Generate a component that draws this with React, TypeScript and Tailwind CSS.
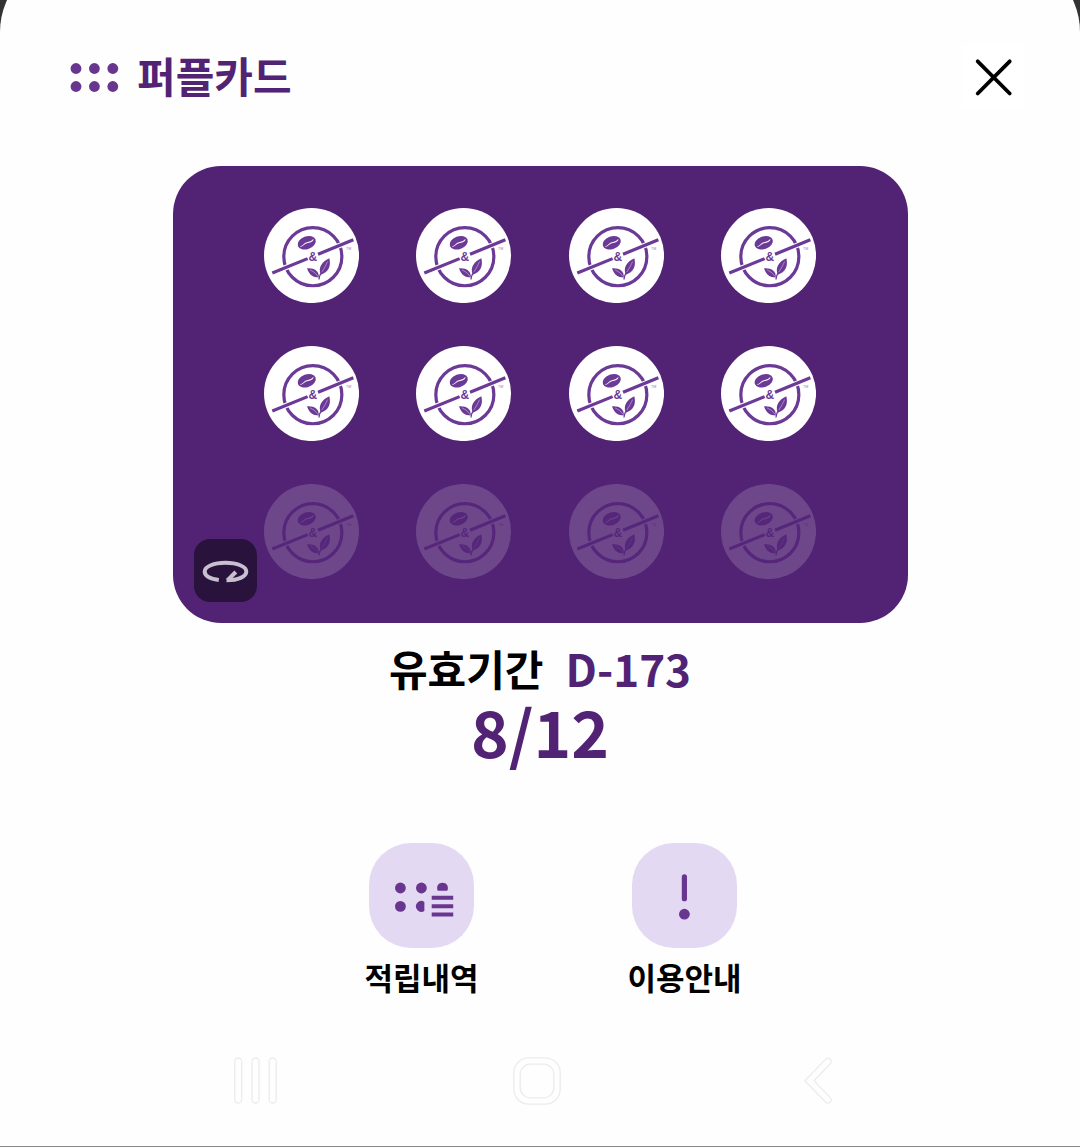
const KO = "font-['Noto_Sans_CJK_KR',sans-serif]";

const TOTAL = 12;
const EARNED = 8;

function StampLogo() {
  return (
    <svg viewBox="0 0 95 95" className="block w-full" aria-hidden="true">
      <circle cx="47.5" cy="47.5" r="47.5" fill="#fff" />
      <circle cx="48.8" cy="48.7" r="29" fill="none" stroke="#6b3a97" strokeWidth="3.2" />
      <path d="M14 62.7 L84 33.9" stroke="#fff" strokeWidth="5.4" />
      <path d="M8.3 65 L43.6 50.6 M54 46.3 L89.3 31.7" stroke="#6b3a97" strokeWidth="3.2" />
      <g transform="rotate(-20 42.7 34.7)">
        <ellipse cx="42.7" cy="34.7" rx="9.4" ry="6.3" fill="#6b3a97" />
        <path d="M35.5 36 C38 37.2 40 34 43 34.9 S47.5 35.6 50 34" fill="none" stroke="#fff" strokeWidth="0.9" />
      </g>
      <text x="48.9" y="53.1" textAnchor="middle" fontSize="12" fontWeight="700" fontFamily="Liberation Sans, sans-serif" fill="#6b3a97">&amp;</text>
      <path d="M43 60.3 C50 59.8 55 62.5 54.8 69.5 C48.5 69.5 45 66.5 43 60.3Z" fill="#6b3a97" />
      <path d="M65.3 50.3 C67.2 58 64.5 64.5 56.6 66.6 C54 59.5 57.5 54 65.3 50.3Z" fill="#6b3a97" />
      <path d="M46 61.8 Q51.5 64 54 68.4 M63.6 53.5 Q60.5 60.5 57 65" fill="none" stroke="#fff" strokeWidth="0.4" />
      <path d="M54.9 71.5 Q54.9 67.5 58 64" fill="none" stroke="#6b3a97" strokeWidth="1.3" />
      <text x="84.6" y="42.4" textAnchor="middle" fontSize="3.6" fontFamily="Liberation Sans, sans-serif" fill="#9a7ab8">TM</text>
    </svg>
  );
}

function RotateIcon() {
  return (
    <svg viewBox="0 0 63 63" className="block size-full" fill="none" stroke="#c8bfd0" strokeWidth="4" aria-hidden="true">
      <path d="M24.8 41 C16 39.8 10.7 36.6 10.7 32.5 C10.7 27.4 20 23.8 31.5 23.8 S52.3 27.4 52.3 32.5 C52.3 37.8 44 41.2 32.5 41.2" />
      <path d="M41.8 33 L33.6 41.2" />
    </svg>
  );
}

function HistoryIcon() {
  return (
    <svg viewBox="0 0 105 105" className="block size-full" fill="#69368f" aria-hidden="true">
      <circle cx="31.4" cy="45" r="5.4" />
      <circle cx="52.4" cy="45" r="5.4" />
      <path d="M68.8 47.7 A5.4 5.4 0 1 1 78.2 47.7Z" />
      <circle cx="31.4" cy="63.4" r="5.4" />
      <path d="M55.4 58.9 A5.4 5.4 0 1 0 55.4 67.9Z" />
      <path d="M62.7 52.8h21.5v4h-21.5zM62.7 61.2h21.5v4h-21.5zM62.7 69.6h21.5v4h-21.5z" />
    </svg>
  );
}

function GuideIcon() {
  return (
    <svg viewBox="0 0 105 105" className="block size-full" fill="#69368f" aria-hidden="true">
      <rect x="49.8" y="31.3" width="5.2" height="27" rx="2.6" />
      <circle cx="52.4" cy="71.2" r="5.4" />
    </svg>
  );
}

const actions = [
  { label: "적립내역", Icon: HistoryIcon },
  { label: "이용안내", Icon: GuideIcon },
];

export default function App() {
  return (
    <div className={`min-h-screen overflow-hidden bg-[#333] ${KO}`}>
      <main className="-mt-11 rounded-t-[76px] border-b border-[#888] bg-[#fefefe] pt-[89px] pb-[41px]">
        <header className="flex h-[63px] items-center justify-between pr-[55px] pl-[70px]">
          <h1 className="flex items-center gap-[18px] text-[42px] leading-[62px] font-bold text-[#522375]">
            <svg viewBox="0 0 49 31" className="w-[49px]" fill="#69368f" aria-hidden="true">
              {[6, 24.4, 42.8].map((x) => (
                <g key={x}>
                  <circle cx={x} cy="7.5" r="5.4" />
                  <circle cx={x} cy="25.5" r="5.4" />
                </g>
              ))}
            </svg>
            <span className="pb-1">퍼플카드</span>
          </h1>
          <button type="button" aria-label="닫기" className="size-[63px] bg-white">
            <svg viewBox="0 0 63 63" className="block size-full" stroke="#000" strokeWidth="3.8" strokeLinecap="round" aria-hidden="true">
              <path d="M15.7 16.3 L47.7 48.5 M47.7 16.3 L15.7 48.5" />
            </svg>
          </button>
        </header>

        <section className="relative mx-auto mt-[58px] w-[735px] max-w-full rounded-[48px] bg-[#522375] pt-[42px] pb-[44px]">
          <ul className="mx-auto grid w-[75%] grid-cols-4 gap-x-[57px] gap-y-[43px]">
            {Array.from({ length: TOTAL }, (_, i) => (
              <li key={i} className={i < EARNED ? "" : "opacity-[0.16]"}>
                <StampLogo />
              </li>
            ))}
          </ul>
          <button type="button" aria-label="카드 뒤집기" className="absolute bottom-[21px] left-[21px] size-[63px] rounded-2xl bg-[#29123b]">
            <RotateIcon />
          </button>
        </section>

        <div className="mt-[21px] flex items-center justify-center gap-[22px] text-[42px] leading-[48px] font-bold">
          <span className="text-black">유효기간</span>
          <span className="text-[44px] text-[#522375]">D-173</span>
        </div>
        <p className="text-center text-[64px] leading-[76px] font-bold text-[#522375]">
          {EARNED}/{TOTAL}
        </p>

        <div className="mt-[75px] flex justify-center gap-[149px] pl-[26px]">
          {actions.map(({ label, Icon }) => (
            <button key={label} type="button" className="flex flex-col items-center text-black">
              <span className="size-[105px] rounded-[42px] bg-[#e4d9f2]">
                <Icon />
              </span>
              <span className="mt-[6px] text-[31px] leading-[46px] font-bold">{label}</span>
            </button>
          ))}
        </div>

        <nav className="mx-auto mt-[57px] grid w-[850px] max-w-full grid-cols-3 justify-items-center pr-[7px]">
          <button type="button" aria-label="최근 앱">
            <svg viewBox="0 0 45 48" className="block w-[45px]" fill="none" stroke="#ececec" strokeWidth="1.3" aria-hidden="true">
              <rect x="1.7" y="1" width="7" height="45" rx="3.5" />
              <rect x="19" y="1" width="7" height="45" rx="3.5" />
              <rect x="36.2" y="1" width="7" height="45" rx="3.5" />
            </svg>
          </button>
          <button type="button" aria-label="홈">
            <svg viewBox="0 0 48 48" className="block w-[48px]" fill="none" stroke="#ececec" strokeWidth="1.3" aria-hidden="true">
              <rect x="0.8" y="0.8" width="46.4" height="46.4" rx="15" />
              <rect x="7.2" y="7.2" width="33.6" height="33.6" rx="10" />
            </svg>
          </button>
          <button type="button" aria-label="뒤로">
            <svg viewBox="0 0 28 48" className="block w-[28px]" fill="none" stroke="#ececec" strokeWidth="1.3" strokeLinejoin="round" aria-hidden="true">
              <path d="M0.9 23.7 L21.5 2.4 C24.6 -0.5 29 3.5 26.3 6.8 L10 23.7 L26.3 40.6 C29 44 24.6 48 21.5 45Z" />
            </svg>
          </button>
        </nav>
      </main>
    </div>
  );
}
